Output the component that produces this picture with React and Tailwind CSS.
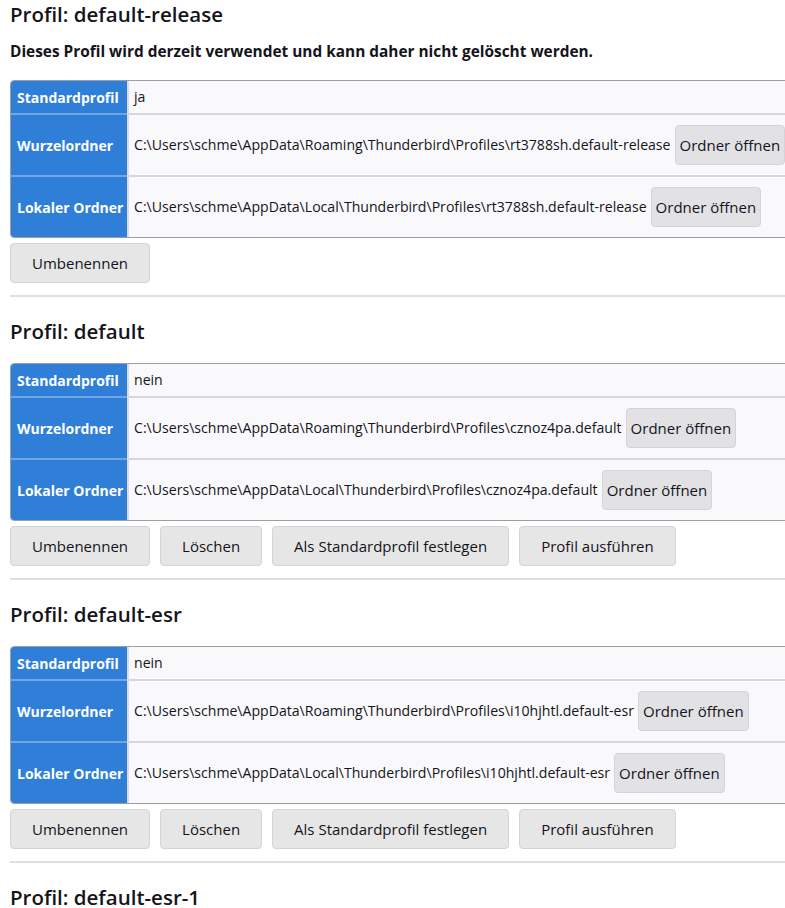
import React from 'react';

const profiles = [
  {
    name: 'default-release',
    isDefault: true,
    inUse: true,
    root: 'C:\\Users\\schme\\AppData\\Roaming\\Thunderbird\\Profiles\\rt3788sh.default-release',
    local: 'C:\\Users\\schme\\AppData\\Local\\Thunderbird\\Profiles\\rt3788sh.default-release',
  },
  {
    name: 'default',
    isDefault: false,
    root: 'C:\\Users\\schme\\AppData\\Roaming\\Thunderbird\\Profiles\\cznoz4pa.default',
    local: 'C:\\Users\\schme\\AppData\\Local\\Thunderbird\\Profiles\\cznoz4pa.default',
  },
  {
    name: 'default-esr',
    isDefault: false,
    root: 'C:\\Users\\schme\\AppData\\Roaming\\Thunderbird\\Profiles\\i10hjhtl.default-esr',
    local: 'C:\\Users\\schme\\AppData\\Local\\Thunderbird\\Profiles\\i10hjhtl.default-esr',
  },
  {
    name: 'default-esr-1',
    isDefault: false,
    root: '',
    local: '',
  },
];

function Button({ children, small }) {
  return (
    <button
      className={
        small
          ? 'h-10 px-[4px] ml-1 shrink-0 rounded-[4px] border border-[#d4d4d8] bg-[#e2e2e5] text-[15px] text-[#15141a]'
          : 'h-10 px-[21px] rounded-[4px] border border-[#d4d4d8] bg-[#e6e6e6] text-[15px] text-[#15141a]'
      }
    >
      {children}
    </button>
  );
}

// one table row: blue label cell, 2px divider, grey value cell
function Row({ label, children, tall, last }) {
  const h = last ? 'h-[60px]' : tall ? 'h-[62px]' : 'h-[34px]';
  return (
    <div className={'flex ' + h}>
      <div
        className={
          'w-[116px] shrink-0 flex items-center px-[6px] bg-[#2f7ed8] text-white font-bold text-[14px] whitespace-nowrap ' +
          (last ? '' : 'border-b-2 border-[#6ea6e6]')
        }
      >
        {label}
      </div>
      <div className="w-[2px] bg-[#dcdce0]" />
      <div
        className={
          'flex-1 flex items-center pl-[5px] bg-[#f9f9fb] text-[14.1px] whitespace-nowrap ' +
          (last ? '' : 'border-b-2 border-[#d7d7db]')
        }
      >
        {children}
      </div>
    </div>
  );
}

function Profile({ p }) {
  return (
    <section>
      <h2 className="pt-[6px] text-[20.5px] font-semibold leading-[28px]">Profil: {p.name}</h2>
      {p.inUse && (
        <p className="mt-[13px] text-[15.4px] leading-[22px] font-bold">
          Dieses Profil wird derzeit verwendet und kann daher nicht gelöscht werden.
        </p>
      )}
      <div className={(p.inUse ? 'mt-[17px] ' : 'mt-[18px] ') + 'w-[800px] rounded-[4px] border border-[#9d9da2] overflow-hidden'}>
        <Row label="Standardprofil">{p.isDefault ? 'ja' : 'nein'}</Row>
        <Row label="Wurzelordner" tall>
          {p.root}
          <Button small>Ordner öffnen</Button>
        </Row>
        <Row label="Lokaler Ordner" tall last>
          {p.local}
          <Button small>Ordner öffnen</Button>
        </Row>
      </div>
      <div className="mt-[5px] flex gap-[10px]">
        <Button>Umbenennen</Button>
        {!p.inUse && <Button>Löschen</Button>}
        {!p.inUse && <Button>Als Standardprofil festlegen</Button>}
        {!p.inUse && <Button>Profil ausführen</Button>}
      </div>
      <hr className="mt-3 mb-[14px] border-t-2 border-[#e0e0e2]" />
    </section>
  );
}

export default function App() {
  return (
    <div
      className="w-[785px] h-[908px] overflow-hidden bg-white pl-[10px] text-[#15141a]"
      style={{ fontFamily: '"Open Sans", "Noto Sans", sans-serif' }}
    >
      <div className="-mt-[6px]">
        {profiles.map((p) => (
          <Profile key={p.name} p={p} />
        ))}
      </div>
    </div>
  );
}
